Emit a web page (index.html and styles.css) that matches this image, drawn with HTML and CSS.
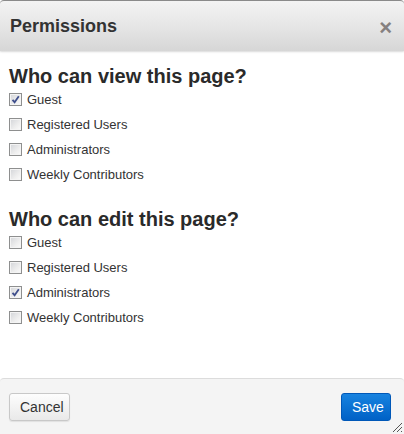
FILE: index.html
```html
<!DOCTYPE html>
<html>
<head>
<meta charset="utf-8">
<link rel="stylesheet" href="styles.css">
</head>
<body>
<div class="dialog">
  <div class="header">
    <div class="title">Permissions</div>
    <div class="close">×</div>
  </div>
  <div class="content">
    <h2 class="section-title first">Who can view this page?</h2>
    <div class="row"><span class="cb checked"><svg viewBox="0 0 9 9" width="9" height="9"><path d="M1.5 4.8 L3.6 7.2 L7.8 1.2" fill="none" stroke="#3f4f8c" stroke-width="1.8"/></svg></span><span class="label">Guest</span></div>
    <div class="row"><span class="cb"></span><span class="label">Registered Users</span></div>
    <div class="row"><span class="cb"></span><span class="label">Administrators</span></div>
    <div class="row"><span class="cb"></span><span class="label">Weekly Contributors</span></div>
    <h2 class="section-title">Who can edit this page?</h2>
    <div class="row"><span class="cb"></span><span class="label">Guest</span></div>
    <div class="row"><span class="cb"></span><span class="label">Registered Users</span></div>
    <div class="row"><span class="cb checked"><svg viewBox="0 0 9 9" width="9" height="9"><path d="M1.5 4.8 L3.6 7.2 L7.8 1.2" fill="none" stroke="#3f4f8c" stroke-width="1.8"/></svg></span><span class="label">Administrators</span></div>
    <div class="row"><span class="cb"></span><span class="label">Weekly Contributors</span></div>
  </div>
  <div class="footer">
    <button class="btn cancel">Cancel</button>
    <button class="btn save">Save</button>
    <svg class="grip" width="12" height="12" viewBox="0 0 12 12"><path d="M11 2 L2 11 M11 6 L6 11 M11 10 L10 11" stroke="#555" stroke-width="1"/></svg>
  </div>
</div>
</body>
</html>
```

FILE: styles.css
```css
html, body {
  margin: 0;
  padding: 0;
  background: #fff;
}
body {
  width: 404px;
  height: 434px;
  overflow: hidden;
  font-family: "Liberation Sans", Arial, sans-serif;
  color: #333;
}
.dialog {
  position: relative;
  height: 434px;
  display: flex;
  flex-direction: column;
  background: #fff;
}
.header {
  height: 50px;
  border-top: 1px solid #8a8a8a;
  border-radius: 4px 4px 0 0;
  background: linear-gradient(to bottom, #f3f3f3 0%, #e6e6e6 50%, #d6d6d6 100%);
  box-shadow: 0 1px 2px rgba(0,0,0,0.15);
  display: flex;
  align-items: center;
  justify-content: space-between;
  padding: 0 10px;
  flex: none;
}
.title {
  font-size: 18px;
  font-weight: bold;
  color: #333;
  margin-top: 1px;
}
.close {
  font-size: 22px;
  font-weight: bold;
  color: #858080;
  line-height: 1;
  margin-top: 4px;
  margin-right: 2px;
}
.content {
  flex: 1;
  padding: 0 9px;
}
.section-title {
  font-size: 20px;
  font-weight: bold;
  color: #2a2a2a;
  line-height: 22px;
  margin: 21px 0 0 0;
}
.section-title.first {
  margin-top: 14px;
}
.row {
  height: 25px;
  display: flex;
  align-items: center;
}
.cb {
  width: 11px;
  height: 11px;
  border: 1px solid #8e8f8f;
  background: linear-gradient(135deg, #d2d4d8 0%, #eeeeee 60%, #fbfbfb 100%);
  box-shadow: inset 0 0 0 1px #f4f4f4;
  display: flex;
  align-items: center;
  justify-content: center;
  flex: none;
}
.label {
  font-size: 13px;
  margin-left: 5px;
  color: #333;
}
.footer {
  flex: none;
  height: 41px;
  border-top: 1px solid #dcdcdc;
  border-radius: 4px 4px 0 0;
  background: #f4f4f4;
  padding: 14px 13px 0 9px;
  display: flex;
  justify-content: space-between;
  align-items: flex-start;
  position: relative;
}
.btn {
  font-family: "Liberation Sans", Arial, sans-serif;
  font-size: 14px;
  height: 28px;
  border-radius: 3px;
  padding: 0 10px;
  cursor: pointer;
}
.cancel {
  width: 61px;
  color: #333;
  border: 1px solid #c8c8c8;
  background: linear-gradient(to bottom, #fdfdfd 0%, #e9e9e9 100%);
  box-shadow: 0 1px 1px rgba(0,0,0,0.08);
}
.save {
  width: 50px;
  color: #fff;
  border: 1px solid #0058b8;
  background: linear-gradient(to bottom, #1783e0 0%, #0061c6 100%);
}
.grip {
  position: absolute;
  right: 1px;
  bottom: 1px;
}
```
